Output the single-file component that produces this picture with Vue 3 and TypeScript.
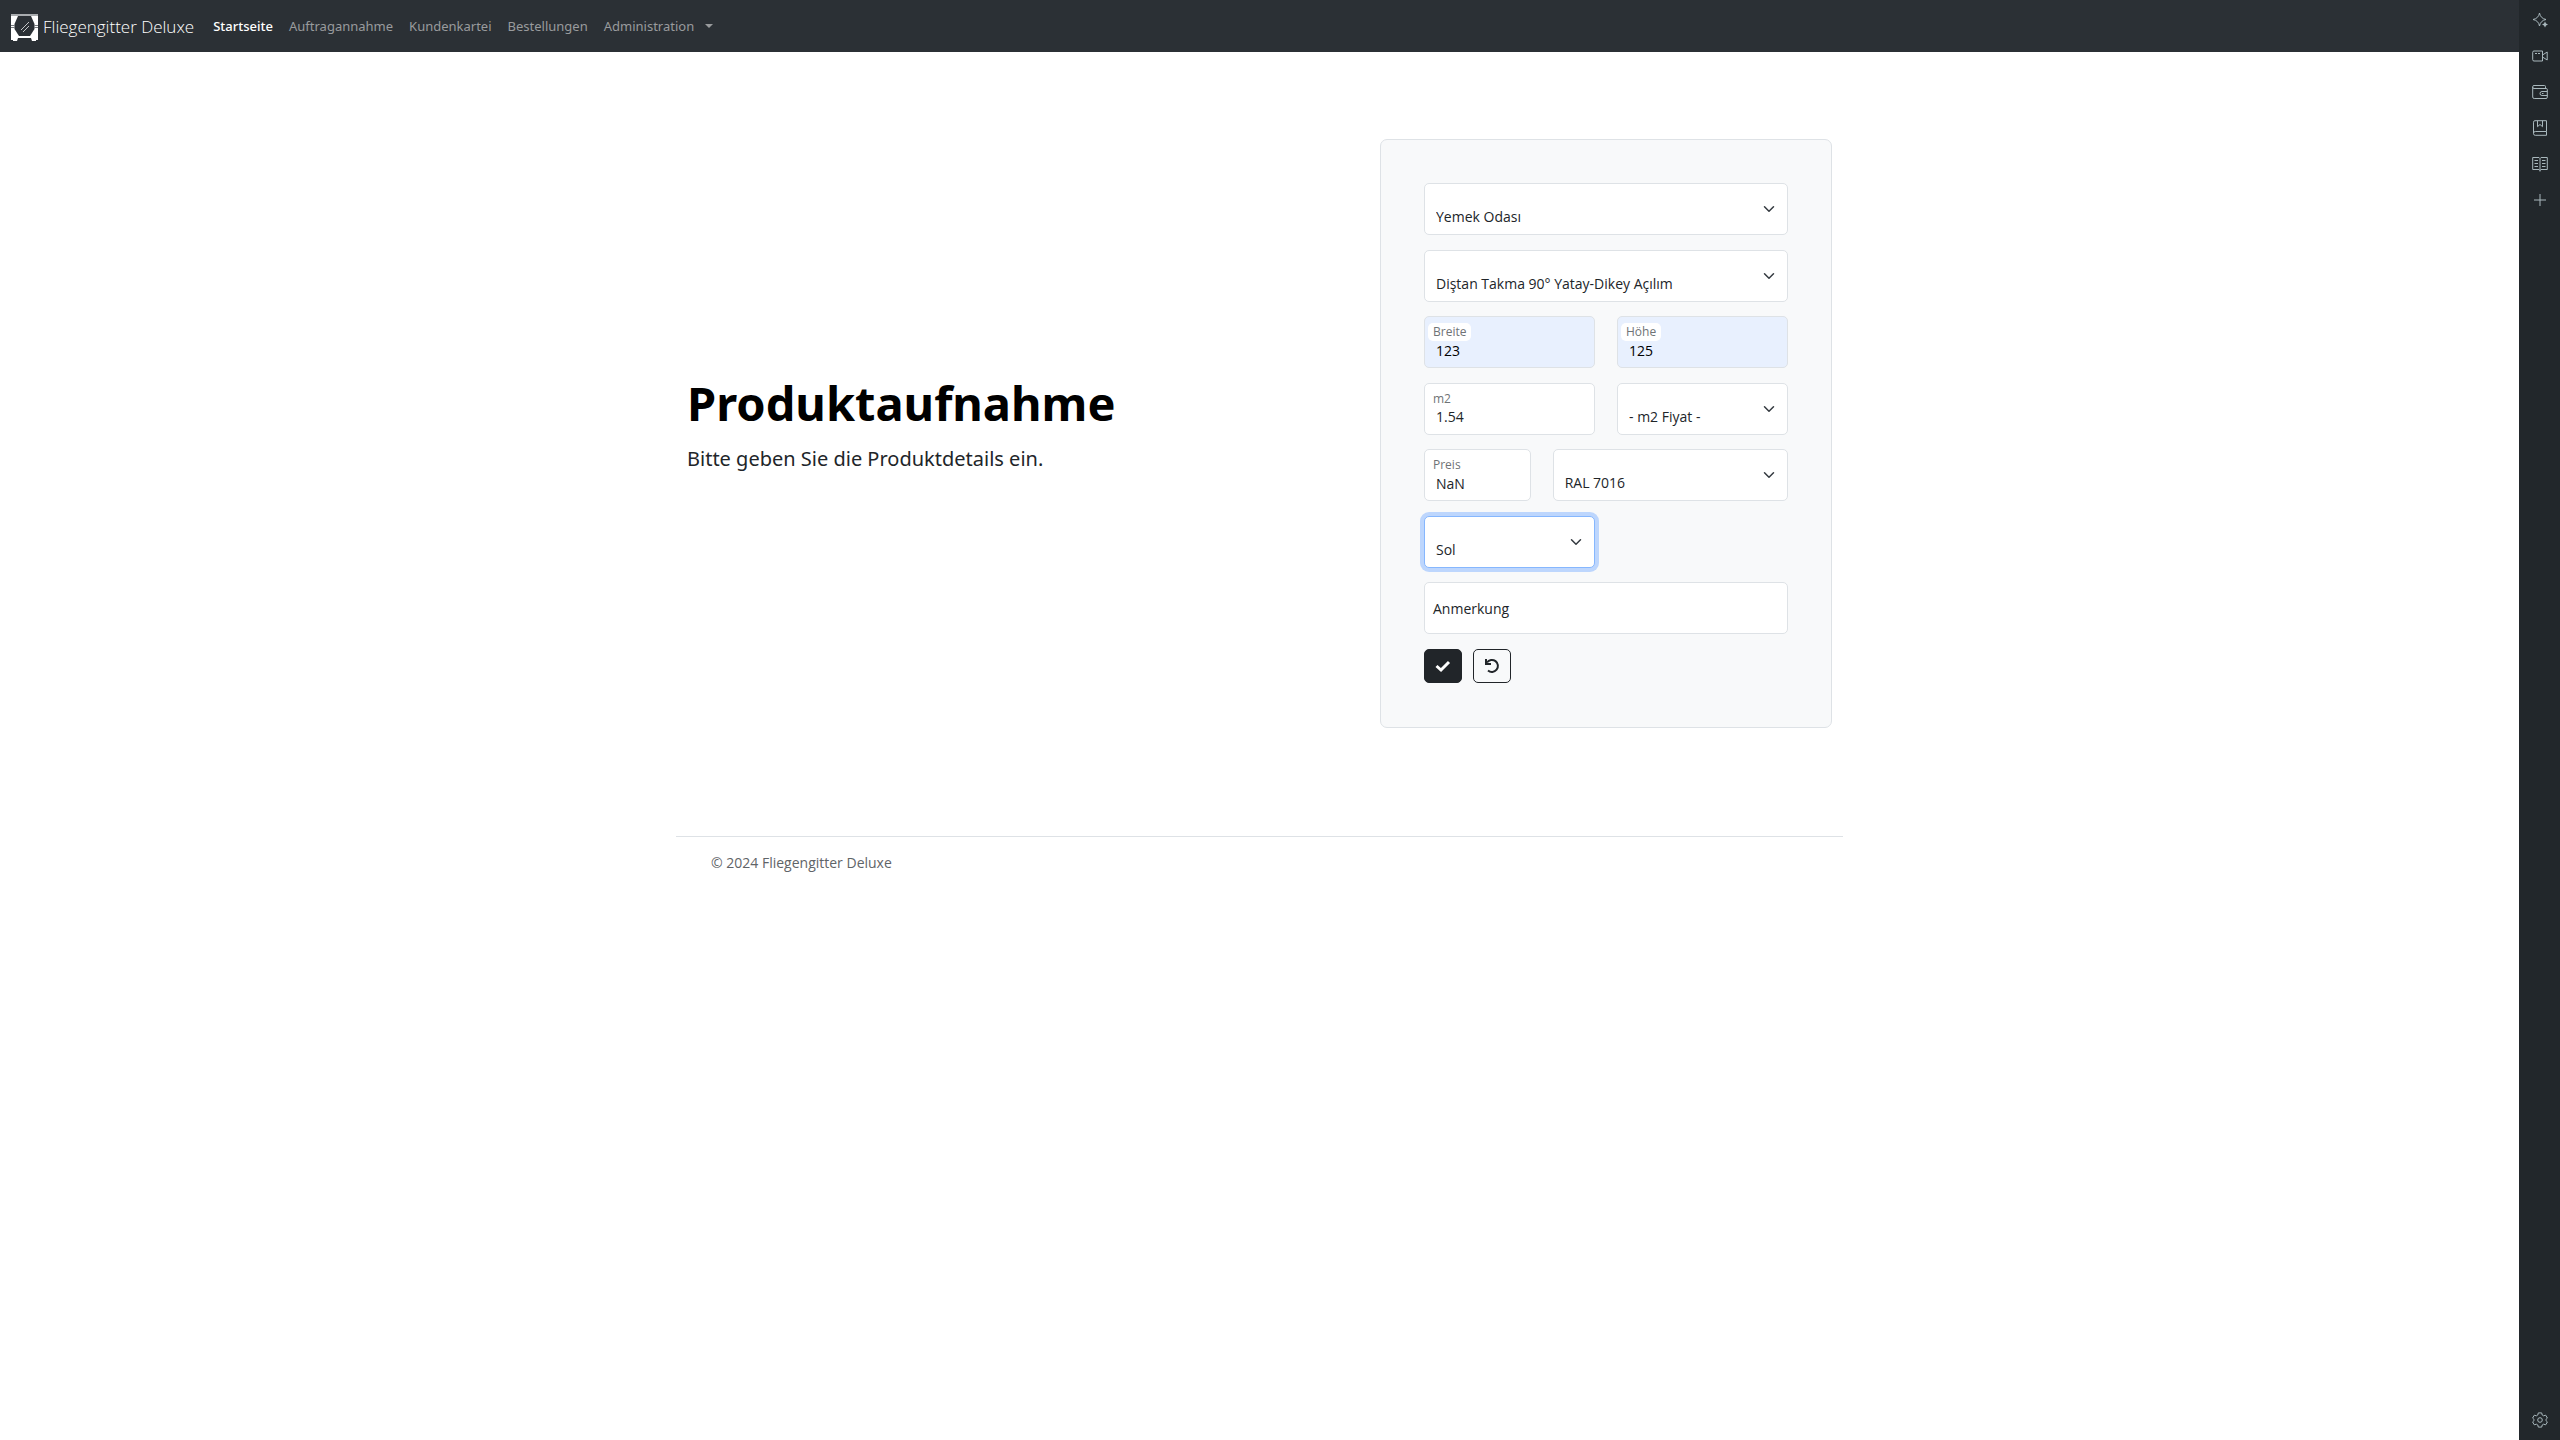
<script setup lang="ts">
import { ref } from 'vue'

interface NavItem {
  label: string
  active?: boolean
  dropdown?: boolean
}

const navItems: NavItem[] = [
  { label: 'Startseite', active: true },
  { label: 'Auftragannahme' },
  { label: 'Kundenkartei' },
  { label: 'Bestellungen' },
  { label: 'Administration', dropdown: true },
]

const room = ref('Yemek Odası')
const product = ref('Diştan Takma 90° Yatay-Dikey Açılım')
const breite = ref('123')
const hoehe = ref('125')
const area = ref('1.54')
const areaPrice = ref('- m2 Fiyat -')
const preis = ref('NaN')
const color = ref('RAL 7016')
const side = ref('Sol')
const note = ref('')
</script>

<template>
  <div class="shell">
    <div class="page">
      <header class="navbar">
        <a class="brand" href="#">
          <svg class="logo" viewBox="0 0 27 27" aria-hidden="true">
            <rect width="27" height="27" fill="#fff" />
            <rect width="27" height="2" fill="#a9acaf" />
            <path d="M7 2h13l3.500 8v5l-4.500 7H8l-4.500-7v-5z" fill="#2b3035" />
            <path d="M0 11.500h4M0 13.500h4M23 11.500h4M23 13.500h4" stroke="#777b7f" />
            <path d="M7 24h13l1 3H6zM0 26h2v1H0zM25 26h2v1h-2z" fill="#2b3035" />
            <path d="M10 16l8-8M12 18l6-6" stroke="#c3c5c7" fill="none" />
          </svg>
          <span>Fliegengitter Deluxe</span>
        </a>
        <nav class="menu">
          <a
            v-for="item in navItems"
            :key="item.label"
            href="#"
            class="menu-link"
            :class="{ active: item.active, dropdown: item.dropdown }"
          >{{ item.label }}</a>
        </nav>
      </header>

      <main class="container">
        <section class="intro">
          <h1>Produktaufnahme</h1>
          <p>Bitte geben Sie die Produktdetails ein.</p>
        </section>

        <form class="card" @submit.prevent>
          <div class="field span-12">
            <select v-model="room" aria-label="Raum"><option>Yemek Odası</option></select>
            <svg class="chevron" viewBox="0 0 16 16" aria-hidden="true"><path d="m2 5 6 6 6-6" /></svg>
          </div>
          <div class="field span-12">
            <select v-model="product" aria-label="Produkt"><option>Diştan Takma 90° Yatay-Dikey Açılım</option></select>
            <svg class="chevron" viewBox="0 0 16 16" aria-hidden="true"><path d="m2 5 6 6 6-6" /></svg>
          </div>
          <div class="field span-6 filled">
            <input id="breite" v-model="breite" type="text" />
            <label for="breite">Breite</label>
          </div>
          <div class="field span-6 filled">
            <input id="hoehe" v-model="hoehe" type="text" />
            <label for="hoehe">Höhe</label>
          </div>
          <div class="field span-6">
            <input id="area" v-model="area" type="text" />
            <label for="area">m2</label>
          </div>
          <div class="field span-6">
            <select v-model="areaPrice" aria-label="m2 Fiyat"><option>- m2 Fiyat -</option></select>
            <svg class="chevron" viewBox="0 0 16 16" aria-hidden="true"><path d="m2 5 6 6 6-6" /></svg>
          </div>
          <div class="field span-4">
            <input id="preis" v-model="preis" type="text" />
            <label for="preis">Preis</label>
          </div>
          <div class="field span-8">
            <select v-model="color" aria-label="Farbe"><option>RAL 7016</option></select>
            <svg class="chevron" viewBox="0 0 16 16" aria-hidden="true"><path d="m2 5 6 6 6-6" /></svg>
          </div>
          <div class="field span-6 current">
            <select v-model="side" aria-label="Seite"><option>Sol</option></select>
            <svg class="chevron" viewBox="0 0 16 16" aria-hidden="true"><path d="m2 5 6 6 6-6" /></svg>
          </div>
          <div class="field span-12 empty">
            <input id="note" v-model="note" type="text" />
            <label for="note">Anmerkung</label>
          </div>
          <div class="actions span-12">
            <button type="submit" class="btn solid" aria-label="Speichern">
              <svg viewBox="0 0 16 16" aria-hidden="true"><path d="M1.500 8l4.500 4L14 4" stroke-width="3" /></svg>
            </button>
            <button type="reset" class="btn" aria-label="Zurücksetzen">
              <svg viewBox="0 0 16 16" aria-hidden="true">
                <path d="M3 4.500A6 6 0 1 1 4 12.500" stroke-width="2" />
                <path d="M2 1v5h5" stroke-width="2" />
              </svg>
            </button>
          </div>
        </form>
      </main>

      <footer class="footer">© 2024 Fliegengitter Deluxe</footer>
    </div>

    <aside class="rail">
      <button type="button" aria-label="Assistent">
        <svg viewBox="0 0 16 16">
          <path d="M7.500 1Q8.500 6.500 14 7.500Q8.500 8.500 7.500 14Q6.500 8.500 1 7.500Q6.500 6.500 7.500 1z" />
          <path class="solid-shape" d="M13 9.500l1 2 2 1-2 1-1 2-1-2-2-1 2-1z" />
        </svg>
      </button>
      <button type="button" aria-label="Video">
        <svg viewBox="0 0 16 16">
          <path d="M2 3h8.500v10H2a1.300 1.300 0 0 1-1.300-1.300V4.300A1.300 1.300 0 0 1 2 3zM10.500 7l4.700-3v8l-4.700-3M10.500 3v2.500M10.500 13v-2.500M3 5.500h2M6 5.500h2" />
        </svg>
      </button>
      <button type="button" aria-label="Wallet">
        <svg viewBox="0 0 16 16">
          <path d="M13.500 4.500V2.500A1 1 0 0 0 12.500 1.500H2A1.300 1.300 0 0 0 .7 2.800V13a1.500 1.500 0 0 0 1.500 1.500h11.800a1.300 1.300 0 0 0 1.300-1.300V5.500a1 1 0 0 0-1-1H2A1.300 1.300 0 0 1 .7 3.200M15.300 7.500H10a2 2 0 0 0 0 4h5.300M10 9.500h1.500" />
        </svg>
      </button>
      <button type="button" aria-label="Lesezeichen">
        <svg viewBox="0 0 16 16">
          <path d="M14.500 11.500V.7H3A1.500 1.500 0 0 0 1.500 2.200v11.300A1.800 1.800 0 0 0 3.300 15.300h11.200v-3.800H3.300a1.800 1.800 0 0 0-1.800 1.800M5.500.7v6L8 4.500l2.500 2.200v-6" />
        </svg>
      </button>
      <button type="button" aria-label="Leseliste">
        <svg viewBox="0 0 16 16">
          <path d="M8 2.500v13M8 2.500L7 1.500H.7v12H7l1 1 1-1h6.300v-12H9zM2.500 4.500H6M2.500 7.500H6M2.500 10.500H6M10 4.500h3.500M10 7.500h3.500M10 10.500h3.500" />
        </svg>
      </button>
      <button type="button" aria-label="Hinzufügen">
        <svg viewBox="0 0 16 16"><path d="M8 2v12M2 8h12" /></svg>
      </button>
      <button type="button" class="rail-end" aria-label="Einstellungen">
        <svg viewBox="0 0 16 16">
          <path d="M6.300.9h3.400l.5 2.100 1.400.8 2.100-.6 1.700 2.900L13.900 7.500v1l1.500 1.400-1.700 2.900-2.100-.6-1.400.8-.5 2.100H6.300L5.800 13l-1.400-.8-2.100.6L.6 9.900l1.500-1.400v-1L.6 6.100l1.700-2.900 2.100.6L5.800 3z" />
          <circle cx="8" cy="8" r="2.300" />
        </svg>
      </button>
    </aside>
  </div>
</template>

<style>
body {
  margin: 0;
  background: #fff;
}
</style>

<style scoped>
.shell {
  display: flex;
  min-height: 100vh;
  font-family: 'Open Sans', 'Noto Sans', sans-serif;
  font-size: 14px;
  line-height: 20px;
  color: #212529;
}
.shell *,
.shell *::before,
.shell *::after {
  box-sizing: border-box;
}
.page {
  flex: 1;
  min-width: 0;
}
.navbar {
  display: flex;
  align-items: center;
  height: 52px;
  padding: 0 11px;
  background: #2b3035;
}
.brand {
  display: flex;
  align-items: center;
  gap: 5px;
  margin-right: 11px;
  padding-top: 2px;
  font-size: 17px;
  font-weight: 300;
  line-height: 28px;
  color: #fff;
  text-decoration: none;
}
.logo {
  width: 27px;
  height: 27px;
}
.menu {
  display: flex;
  font-family: 'Noto Sans', sans-serif;
  font-size: 13px;
}
.menu-link {
  padding: 0 8px;
  color: #999b9d;
  text-decoration: none;
}
.menu-link.active {
  font-weight: 500;
  color: #fff;
}
.menu-link.dropdown::after {
  content: '';
  display: inline-block;
  margin-left: 11px;
  vertical-align: 3px;
  border: 4px solid transparent;
  border-top-color: currentColor;
  border-bottom: 0;
}
.container {
  display: grid;
  grid-template-columns: 1fr 452px;
  align-items: center;
  max-width: 1167px;
  margin: 0 auto;
  padding: 87px 11px 108px;
}
.intro {
  font-family: 'Noto Sans', sans-serif;
}
h1 {
  margin: 0 0 11px;
  font-size: 47px;
  font-weight: 700;
  line-height: 60px;
  color: #000;
}
.intro p {
  margin: 0 0 20px;
  font-size: 20px;
  line-height: 30px;
}
.card {
  display: grid;
  grid-template-columns: repeat(12, 1fr);
  align-content: space-between;
  column-gap: 22px;
  min-height: 589px;
  padding: 43px 43px 44px;
  border: 1px solid #dee2e6;
  border-radius: 7px;
  background: #f8f9fa;
}
.span-4 {
  grid-column: span 4;
}
.span-6 {
  grid-column: span 6;
}
.span-8 {
  grid-column: span 8;
}
.span-12 {
  grid-column: span 12;
}
.field {
  position: relative;
  height: 52px;
}
.field input,
.field select {
  width: 100%;
  height: 100%;
  margin: 0;
  padding: 16px 11px 0;
  border: 1px solid #dee2e6;
  border-radius: 5px;
  background: #fff;
  appearance: none;
  font: inherit;
  color: #212529;
  outline: 0;
}
.filled input {
  background: #e8f0fe;
  color: #000;
}
.current select {
  border-color: #86b7fe;
  box-shadow: 0 0 0 4px #bdd6fd;
}
.field label {
  position: absolute;
  top: 7px;
  left: 4px;
  padding: 0 5px;
  border-radius: 5px;
  background: #fff;
  font-size: 12px;
  line-height: 18px;
  color: #6f7376;
}
.field.empty label {
  top: 17px;
  font-size: 14px;
  line-height: 20px;
  color: #212529;
}
.chevron {
  position: absolute;
  top: 20px;
  right: 13px;
  width: 12px;
  height: 12px;
  fill: none;
  stroke: #343a40;
  stroke-width: 2;
  stroke-linecap: round;
  stroke-linejoin: round;
  pointer-events: none;
}
.actions {
  display: flex;
  gap: 11px;
}
.btn {
  display: flex;
  align-items: center;
  justify-content: center;
  width: 38px;
  height: 34px;
  padding: 0;
  border: 1px solid #212529;
  border-radius: 5px;
  background: transparent;
  color: #212529;
}
.btn.solid {
  background: #212529;
  color: #fff;
}
.btn svg {
  width: 16px;
  height: 16px;
  fill: none;
  stroke: currentColor;
}
.footer {
  max-width: 1167px;
  margin: 0 auto;
  padding: 16px 35px;
  border-top: 1px solid #dee2e6;
  color: #5f6468;
}
.rail {
  display: flex;
  flex-direction: column;
  width: 41px;
  padding: 2px 0;
  background: #22272b;
}
.rail button {
  display: flex;
  align-items: center;
  justify-content: center;
  height: 36px;
  padding: 0;
  border: 0;
  background: none;
}
.rail svg {
  width: 16px;
  height: 16px;
  fill: none;
  stroke: #a9b8bd;
}
.rail .solid-shape {
  fill: #a9b8bd;
  stroke: none;
}
.rail-end {
  margin-top: auto;
}
</style>
